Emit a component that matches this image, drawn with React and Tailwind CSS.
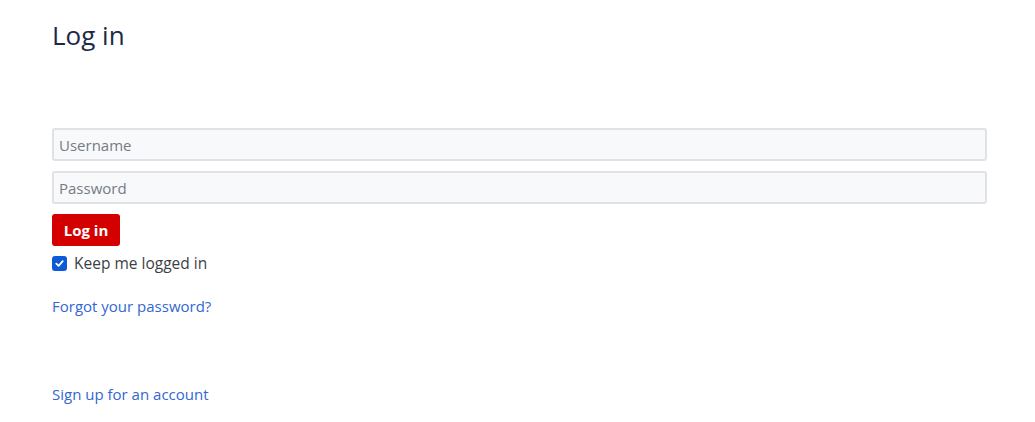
export default function App() {
    return (
        <div className="min-h-screen bg-white font-['Open_Sans',sans-serif] text-[#33373d]">
            <div className="pl-[52px] pr-[48px] pt-[17px]">
                <h1 className="text-[26px] leading-[36px] text-[#1c2a48]">Log in</h1>

                <form className="mt-[75px] flex flex-col">
                    <input
                        type="text"
                        placeholder="Username"
                        className="h-[33px] w-full rounded-[3px] border-2 border-[#e0e2e7] bg-[#f8f9fb] px-[5px] text-[15px] placeholder:text-[#767b85] outline-none"
                    />
                    <input
                        type="password"
                        placeholder="Password"
                        className="mt-[10px] h-[33px] w-full rounded-[3px] border-2 border-[#e0e2e7] bg-[#f8f9fb] px-[5px] text-[15px] placeholder:text-[#767b85] outline-none"
                    />
                    <div className="mt-[10px]">
                        <button
                            type="button"
                            className="h-[32px] w-[68px] rounded-[3px] bg-[#d40000] text-[15px] font-bold text-white"
                        >
                            Log in
                        </button>
                    </div>
                    <label className="mt-[7px] flex items-center gap-[7px] text-[15.5px] leading-[20px] text-[#3b3f47]">
                        <span className="flex h-[15px] w-[15px] items-center justify-center rounded-[3px] bg-[#0d5ad6]">
                            <svg width="11" height="11" viewBox="0 0 12 12" fill="none">
                                <path d="M2.5 6.2 L5 8.5 L9.5 3.5" stroke="white" strokeWidth="2" strokeLinecap="round" strokeLinejoin="round" />
                            </svg>
                        </span>
                        Keep me logged in
                    </label>
                </form>

                <div className="mt-[23px] text-[15px] leading-[20px] text-[#3367d1]">
                    <a href="#">Forgot your password?</a>
                </div>
                <div className="mt-[68px] text-[15px] leading-[20px] text-[#3367d1]">
                    <a href="#">Sign up for an account</a>
                </div>
            </div>
        </div>
    )
}
